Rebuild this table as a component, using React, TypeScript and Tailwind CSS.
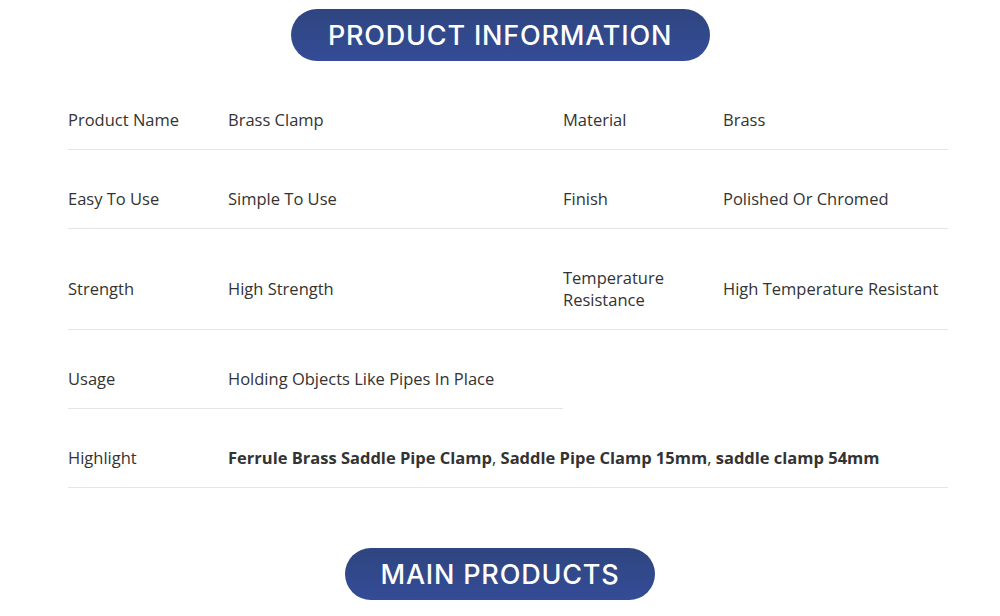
import type { ReactNode } from 'react';

const Pill = ({ children, w }: { children: ReactNode; w: string }) => (
  <div className="flex justify-center">
    <div
      className={`${w} h-[52px] rounded-full bg-gradient-to-b from-[#2f4580] to-[#344c97] flex items-center justify-center pt-[2px] text-white text-[27px] font-medium tracking-[0.8px] font-['Inter',sans-serif]`}
    >
      {children}
    </div>
  </div>
);

const cell = 'flex items-center border-b border-[#e5e5e5] pt-[38px] pb-[18px] leading-[22px]';

export default function App() {
  return (
    <div className="w-[1000px] h-[616px] bg-white overflow-hidden pt-[9px] font-['Open_Sans','Noto_Sans',sans-serif] text-[16.5px] text-[#333]">
      <Pill w="w-[419px]">PRODUCT INFORMATION</Pill>

      {/* spec table */}
      <div className="ml-[68px] w-[880px] mt-[10px] grid grid-cols-[160px_335px_160px_1fr]">
        <div className={cell}>Product Name</div>
        <div className={cell}>Brass Clamp</div>
        <div className={cell}>Material</div>
        <div className={cell}>Brass</div>

        <div className={cell}>Easy To Use</div>
        <div className={cell}>Simple To Use</div>
        <div className={cell}>Finish</div>
        <div className={cell}>Polished Or Chromed</div>

        <div className={cell}>Strength</div>
        <div className={cell}>High Strength</div>
        <div className={cell}>
          Temperature
          <br />
          Resistance
        </div>
        <div className={cell}>High Temperature Resistant</div>

        <div className={cell}>Usage</div>
        <div className={cell}>Holding Objects Like Pipes In Place</div>
        <div />
        <div />

        <div className={cell}>Highlight</div>
        <div className={`${cell} col-span-3 whitespace-pre`}>
          <b className="font-bold">Ferrule Brass Saddle Pipe Clamp</b>, <b className="font-bold">Saddle Pipe Clamp 15mm</b>, <b className="font-bold">saddle clamp 54mm</b>
        </div>
      </div>

      <div className="mt-[60px]">
        <Pill w="w-[310px]">MAIN PRODUCTS</Pill>
      </div>
    </div>
  );
}
